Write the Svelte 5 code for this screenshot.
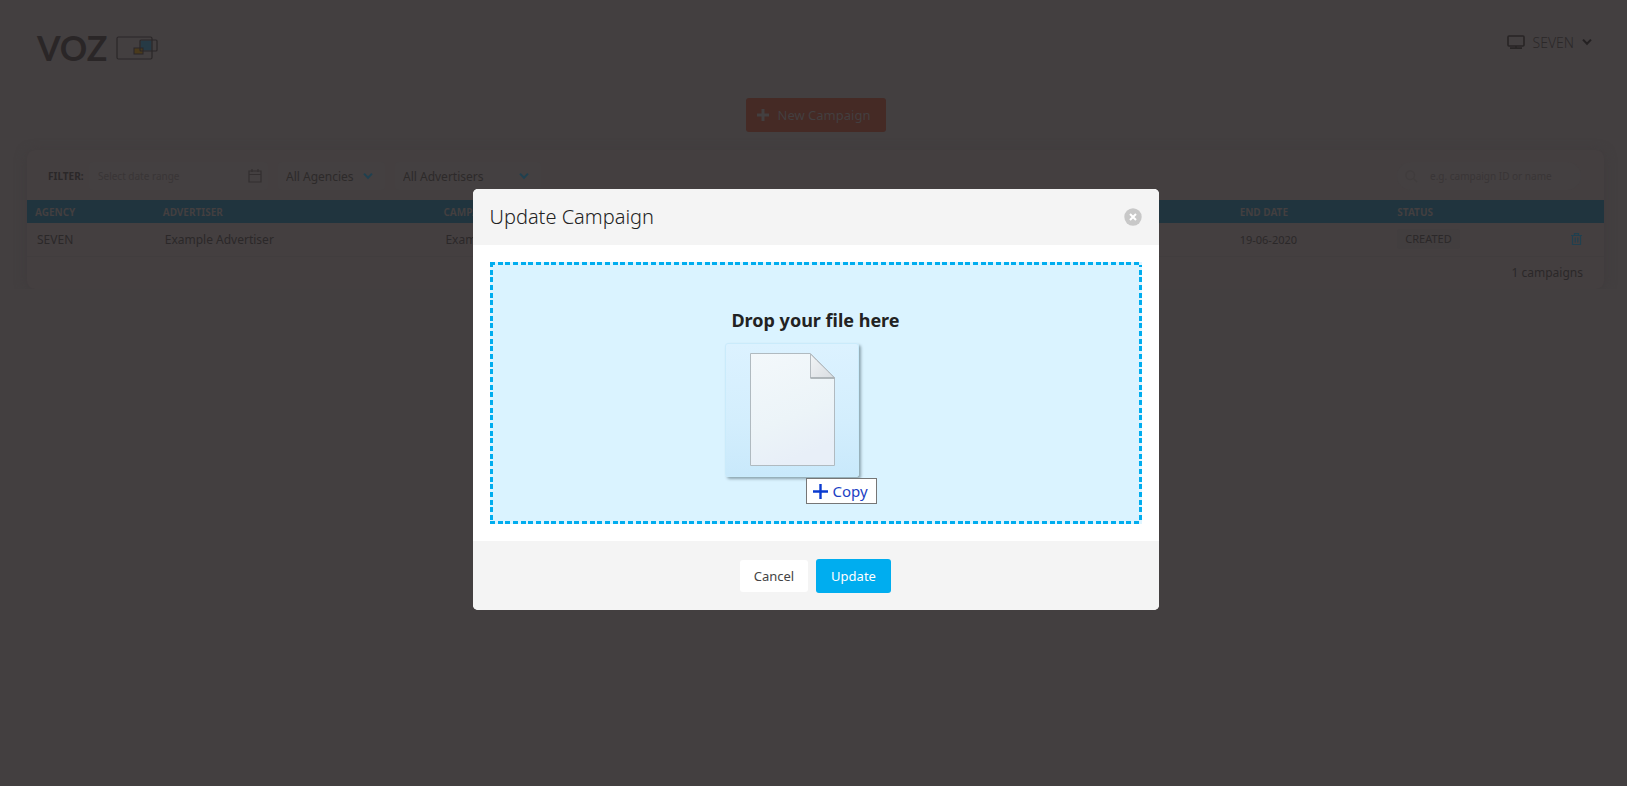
<script>
  let agency = $state('All Agencies');
  let advertiser = $state('All Advertisers');
  const campaigns = [
    { agency: 'SEVEN', advertiser: 'Example Advertiser', name: 'Example', end: '19-06-2020', status: 'CREATED' }
  ];
</script>

{#snippet chevron()}
  <svg class="chevron" viewBox="0 0 10 8" aria-hidden="true"><path d="M1 1.6 5 5.8 9 1.6" /></svg>
{/snippet}

<div class="page">
  <header class="top">
    <a class="logo" href="#home">
      <span>VOZ</span>
      <svg viewBox="0 0 42 24" width="42" height="24" aria-hidden="true">
        <rect x="24.5" y="4.5" width="11" height="10" fill="#263a45" />
        <rect x="18" y="12" width="9" height="6" fill="#4a3a1c" stroke="#2b2728" stroke-width="1" />
        <g fill="none" stroke="#2b2728" stroke-width="1.2">
          <rect x="1" y="1" width="35" height="22" rx="1.5" />
          <rect x="24" y="4" width="17" height="11" rx="1" />
        </g>
      </svg>
    </a>
    <button class="account">
      <svg class="monitor" viewBox="0 0 18 15" width="18" height="15" aria-hidden="true">
        <rect x="1" y="1" width="16" height="10" rx="1" fill="none" stroke="#282525" stroke-width="1.6" />
        <path d="M9 11v2M3 13.2h12" stroke="#282525" stroke-width="1.8" />
      </svg>
      <span>SEVEN</span>
      {@render chevron()}
    </button>
  </header>

  <div class="actions">
    <button class="new">
      <svg viewBox="0 0 12 12" width="12" height="12" aria-hidden="true"><path d="M6 0v12M0 6h12" stroke="#433f40" stroke-width="3" /></svg>
      New Campaign
    </button>
  </div>

  <section class="card">
    <div class="filters">
      <label class="caption" for="dates">FILTER:</label>
      <div class="date">
        <input id="dates" type="text" placeholder="Select date range" />
        <svg viewBox="0 0 14 14" width="14" height="14" aria-hidden="true">
          <path d="M1 2h12v11H1zM1 5.5h12M4 0v3M10 0v3" fill="none" stroke="#332f30" stroke-width="1.2" />
        </svg>
      </div>
      <div class="select agencies">
        <select aria-label="Agency" bind:value={agency}><option>All Agencies</option></select>
        {@render chevron()}
      </div>
      <div class="select advertisers">
        <select aria-label="Advertiser" bind:value={advertiser}><option>All Advertisers</option></select>
        {@render chevron()}
      </div>
      <div class="search">
        <svg viewBox="0 0 13 13" width="13" height="13" aria-hidden="true"><path d="M8.5 8.5 12 12M9.5 5.2a4.3 4.3 0 1 1-8.6 0 4.3 4.3 0 0 1 8.6 0z" fill="none" stroke="#403c3d" stroke-width="1.3" /></svg>
        <input type="text" aria-label="Search campaigns" placeholder="e.g. campaign ID or name" />
      </div>
    </div>

    <table>
      <thead>
        <tr>
          <th class="c-agency">AGENCY</th>
          <th class="c-advertiser">ADVERTISER</th>
          <th>CAMPAIGN</th>
          <th class="c-end">END DATE</th>
          <th class="c-status">STATUS</th>
          <th class="c-tools"></th>
        </tr>
      </thead>
      <tbody>
        {#each campaigns as c}
          <tr>
            <td>{c.agency}</td>
            <td>{c.advertiser}</td>
            <td>{c.name}</td>
            <td class="small">{c.end}</td>
            <td class="small"><span class="pill">{c.status}</span></td>
            <td class="tools">
              <button class="trash" aria-label="Delete campaign">
                <svg viewBox="0 0 11 12" width="11" height="12" aria-hidden="true"><path d="M0 2.500h11M3.500 2.500V.7h4v1.800M1.500 2.500v9h8v-9M4.200 4.500v5M6.800 4.500v5" fill="none" stroke="#20404f" stroke-width="1.2" /></svg>
              </button>
            </td>
          </tr>
        {/each}
      </tbody>
    </table>
    <div class="total">{campaigns.length} campaigns</div>
  </section>
</div>

<div class="overlay">
  <div class="modal" role="dialog" aria-modal="true" aria-labelledby="title">
    <div class="head">
      <h2 id="title">Update Campaign</h2>
      <button class="close" aria-label="Close">
        <svg viewBox="0 0 18 18" width="18" height="18" aria-hidden="true">
          <circle cx="9" cy="9" r="8.7" fill="#c8c8c8" />
          <path d="M6 6l6 6M12 6l-6 6" stroke="#fff" stroke-width="2" />
        </svg>
      </button>
    </div>
    <div class="body">
      <div class="drop">
        <h3>Drop your file here</h3>
        <div class="ghost">
          <svg viewBox="0 0 85 113" width="85" height="113" aria-hidden="true">
            <defs>
              <linearGradient id="sheet" x1="0" y1="0" x2="0.3" y2="1">
                <stop offset="0" stop-color="#f3f8fb" />
                <stop offset=".65" stop-color="#ecf4f8" />
                <stop offset="1" stop-color="#e8eff8" />
              </linearGradient>
              <linearGradient id="fold" x1="0" y1="0" x2="1" y2="1">
                <stop offset="0" stop-color="#f2f4f6" />
                <stop offset="1" stop-color="#d8dde1" />
              </linearGradient>
            </defs>
            <path d="M.5.5h60l24 24v88H.5z" fill="url(#sheet)" stroke="#b0bac0" />
            <path d="M60.500 1v24h24C77 17 68 9 60.500 1z" fill="url(#fold)" stroke="#b4bbc0" />
            <path d="M60.500 25h24" stroke="#a5acb1" stroke-width="1.5" />
          </svg>
          <div class="copy">
            <svg viewBox="0 0 15 15" width="15" height="15" aria-hidden="true"><path d="M7.500 0v15M0 7.500h15" stroke="#0a3bd0" stroke-width="2.400" /></svg>
            Copy
          </div>
        </div>
      </div>
    </div>
    <div class="foot">
      <button class="cancel">Cancel</button>
      <button class="update">Update</button>
    </div>
  </div>
</div>

<style>
  :global(body) {
    background: #433f40;
    font-family: "Noto Sans", "Open Sans", sans-serif;
    color: #2b2829;
  }
  * { box-sizing: border-box; }
  button, input, select { font: inherit; color: inherit; border: 0; background: none; padding: 0; margin: 0; }
  button { display: flex; align-items: center; justify-content: center; }
  svg { display: block; flex: none; }
  .page { padding: 0 23px 0 27px; }
  .top { display: flex; justify-content: space-between; align-items: flex-start; height: 98px; padding: 24px 12px 0 10px; }
  .logo { display: flex; align-items: center; gap: 9px; color: #2a2627; text-decoration: none; font: 700 34px/48px Lato, sans-serif; }
  .account { gap: 8px; height: 36px; font-size: 14px; font-weight: 300; }
  .chevron { width: 10px; height: 8px; fill: none; stroke: #20404f; stroke-width: 2; }
  .account .chevron { stroke: #242122; }
  .actions { display: flex; justify-content: center; }
  .new { gap: 9px; width: 140px; height: 34px; padding-right: 4px; border-radius: 3px; background: #452a25; color: #433f40; font-size: 13px; }

  .card { margin-top: 18px; border-radius: 8px; background: #443f40; box-shadow: 0 2px 12px #3f3b3c; }
  .filters { display: flex; align-items: center; height: 50px; padding: 2px 23px 0 21px; font-size: 12px; }
  .caption { width: 41px; font-size: 10px; font-weight: 700; }
  .date { display: flex; align-items: center; width: 179px; height: 28px; padding: 0 6px 0 9px; border-radius: 4px; background: #444041; }
  .date input { flex: 1; min-width: 0; font-size: 10px; }
  input::placeholder { color: #393536; opacity: 1; }
  .select { display: flex; align-items: center; height: 28px; padding: 0 12px 0 8px; border-radius: 4px; background: #444041; color: #2d2a2a; }
  .select select { flex: 1; min-width: 0; appearance: none; }
  .agencies { width: 107px; margin-left: 10px; }
  .advertisers { width: 146px; margin-left: 10px; }
  .search { display: flex; align-items: center; gap: 12px; width: 184px; height: 28px; margin-left: auto; padding: 0 8px; border-radius: 14px; background: #444041; }
  .search input { flex: 1; min-width: 0; font-size: 10px; }

  table { width: 100%; table-layout: fixed; border-collapse: collapse; }
  th { height: 23px; padding: 0 8px; background: #20343e; color: #433f40; font-size: 10px; font-weight: 700; text-align: left; overflow: hidden; }
  .c-agency { width: 8.1%; }
  .c-advertiser { width: 17.8%; }
  .c-end, .c-status { width: 10%; }
  .c-tools { width: 57px; }
  td { height: 33px; padding: 0 10px; font-size: 12px; border-bottom: 1px solid #413d3e; }
  td.small { padding: 0 8px; font-size: 11px; }
  .pill { display: inline-block; padding: 0 8px; border-radius: 3px; background: #423e3f; line-height: 20px; }
  .tools { padding: 0 22px 0 0; }
  .trash { margin-left: auto; }
  .total { height: 32px; padding-right: 21px; text-align: right; font-size: 12px; line-height: 32px; }

  .overlay { position: absolute; inset: 0; display: flex; justify-content: center; align-items: flex-start; padding: 189px 23px 24px 27px; }
  .modal { width: 100%; max-width: 686px; border-radius: 5px; overflow: hidden; background: #fff; }
  .head { display: flex; align-items: center; justify-content: space-between; height: 56px; padding: 0 17px; background: #f4f4f4; }
  h2 { margin: 0; font-size: 20px; line-height: 28px; font-weight: 300; color: #222; }
  .body { padding: 17px; }
  .drop {
    --dash: #00adef 0 22%, #dff5ff 22% 33%;
    height: 262px;
    padding-top: 45px;
    text-align: center;
    background:
      repeating-linear-gradient(90deg, var(--dash)) 0 0 / 23px 3px repeat-x,
      repeating-linear-gradient(90deg, var(--dash)) 0 100% / 23px 3px repeat-x,
      repeating-linear-gradient(var(--dash)) 0 0 / 3px 23px repeat-y,
      repeating-linear-gradient(var(--dash)) 100% 0 / 3px 23px repeat-y,
      #daf3ff;
  }
  h3 { margin: 0; font-size: 18px; line-height: 26px; color: #222; }
  .ghost {
    position: relative;
    width: 134px;
    height: 134px;
    margin: 10px auto 0;
    left: -24px;
    padding: 9px 24px;
    border: 1px solid #caebfb;
    border-radius: 3px;
    background: linear-gradient(#dcf2ff, #d3eefd 60%, #c9e9fb);
    box-shadow: 2px 2px 3px #8da5b0;
  }
  .copy {
    position: absolute;
    left: 80px;
    top: 134px;
    display: flex;
    align-items: center;
    gap: 5px;
    height: 26px;
    padding: 0 8px 0 6px;
    border: 1px solid #767676;
    background: #fff;
    color: #1b3fc4;
    font-size: 15px;
  }
  .foot { display: flex; align-items: center; justify-content: center; gap: 8px; height: 69px; background: #f4f4f4; font-size: 13px; }
  .cancel { width: 68px; height: 32px; border-radius: 3px; background: #fff; color: #444; }
  .update { width: 75px; height: 34px; border-radius: 3px; background: #00adef; color: #fff; }
</style>
